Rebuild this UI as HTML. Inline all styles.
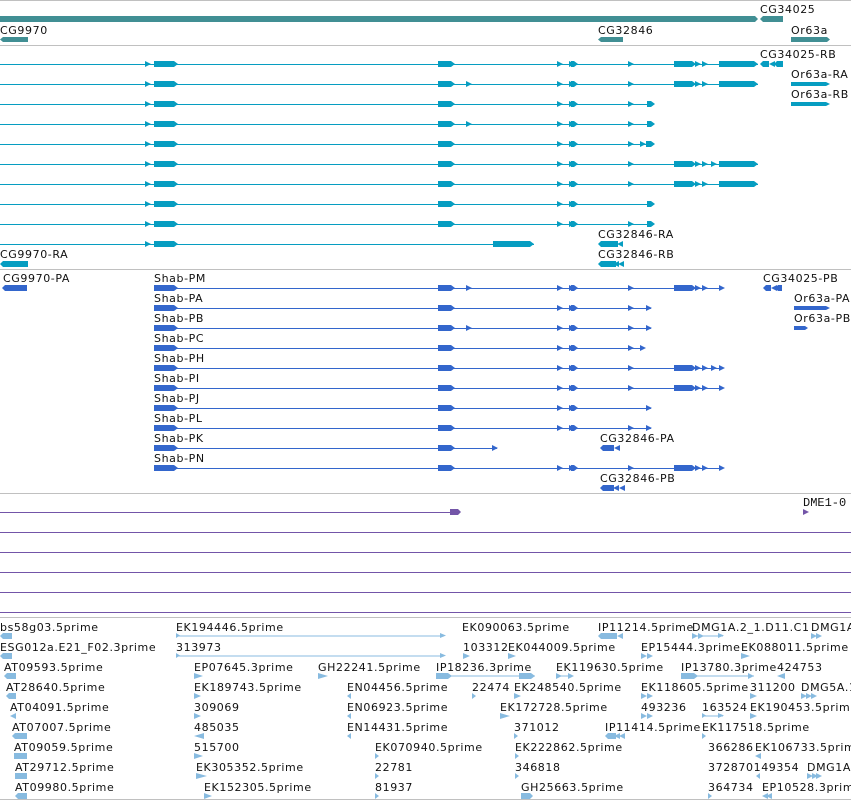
<!DOCTYPE html>
<html><head><meta charset="utf-8"><style>
html,body{margin:0;padding:0;background:#fff;width:851px;height:801px;overflow:hidden}
svg{display:block}
text{font-family:"DejaVu Sans","Liberation Sans",sans-serif;font-size:11px;fill:#111;letter-spacing:0.6px}
.g{fill:#418f94}.t{fill:#069dc1}.p{fill:#3366cc}.u{fill:#7355a8}.e{fill:#88bbe0}
</style></head><body>
<svg width="851" height="801" viewBox="0 0 851 801" xmlns="http://www.w3.org/2000/svg">
<defs>
<polygon id="ar" points="0,-3 6,0 0,3"/>
<polygon id="al" points="6,-3 0,0 6,3"/>
<g id="tA"><rect x="0" y="0" width="758" height="1"/><use href="#ar" x="145"/><polygon points="154,-3 174,-3 178,0 174,3 154,3"/><polygon points="438,-3 451,-3 455,0 451,3 438,3"/><use href="#ar" x="557"/><use href="#ar" x="569"/><polygon points="571,-3 574,-3 578,0 574,3 571,3"/><use href="#ar" x="628"/><polygon points="674,-3 692,-3 696,0 692,3 674,3"/><use href="#ar" x="695"/><use href="#ar" x="702"/><polygon points="719,-3 754,-3 758,0 754,3 719,3"/></g>
<g id="tB"><rect x="0" y="0" width="652" height="1"/><use href="#ar" x="145"/><polygon points="154,-3 174,-3 178,0 174,3 154,3"/><polygon points="438,-3 451,-3 455,0 451,3 438,3"/><use href="#ar" x="557"/><use href="#ar" x="569"/><polygon points="571,-3 574,-3 578,0 574,3 571,3"/><use href="#ar" x="628"/><polygon points="647,-3 651,-3 655,0 651,3 647,3"/></g>
<g id="pA"><rect x="154" y="0" width="568" height="1"/><polygon points="154,-3 174,-3 178,0 174,3 154,3"/><polygon points="438,-3 451,-3 455,0 451,3 438,3"/><use href="#ar" x="557"/><use href="#ar" x="569"/><polygon points="571,-3 574,-3 578,0 574,3 571,3"/><use href="#ar" x="628"/><polygon points="674,-3 692,-3 696,0 692,3 674,3"/><use href="#ar" x="695"/><use href="#ar" x="702"/><use href="#ar" x="719"/></g>
<g id="pB"><rect x="154" y="0" width="497" height="1"/><polygon points="154,-3 174,-3 178,0 174,3 154,3"/><polygon points="438,-3 451,-3 455,0 451,3 438,3"/><use href="#ar" x="557"/><use href="#ar" x="569"/><polygon points="571,-3 574,-3 578,0 574,3 571,3"/><use href="#ar" x="628"/><use href="#ar" x="646"/></g>
</defs>
<g fill="#c0c0c0"><rect x="0" y="0" width="851" height="1"/><rect x="0" y="45" width="851" height="1"/><rect x="0" y="269" width="851" height="1"/><rect x="0" y="493" width="851" height="1"/><rect x="0" y="617" width="851" height="1"/><rect x="0" y="799" width="851" height="1"/></g>

<g class="g"><polygon points="0,16 755,16 758,19 755,22 0,22"/><polygon points="763,16 783,16 783,22 763,22 760,19"/><polygon points="3,37 28,37 28,42 3,42 0,39.5"/><polygon points="601,37 623,37 623,42 601,42 598,39.5"/><polygon points="791,37 827,37 830,39.5 827,42 791,42"/></g>
<text x="760" y="13">CG34025</text><text x="0" y="34">CG9970</text><text x="598" y="34">CG32846</text><text x="791" y="34">Or63a</text>

<g class="t">
<use href="#tA" y="64"/>
<use href="#tA" y="84"/><use href="#ar" x="466" y="84"/>
<use href="#tB" y="104"/>
<use href="#tB" y="124"/><use href="#ar" x="466" y="124"/>
<g transform="translate(0,144)"><rect x="0" y="0" width="652" height="1"/><use href="#ar" x="145"/><polygon points="154,-3 174,-3 178,0 174,3 154,3"/><polygon points="438,-3 451,-3 455,0 451,3 438,3"/><use href="#ar" x="557"/><use href="#ar" x="569"/><polygon points="571,-3 574,-3 578,0 574,3 571,3"/><use href="#ar" x="628"/><use href="#ar" x="640"/><polygon points="646,-3 651,-3 655,0 651,3 646,3"/></g>
<use href="#tA" y="164"/><use href="#ar" x="711" y="164"/>
<use href="#tA" y="184"/>
<g transform="translate(0,204)"><rect x="0" y="0" width="652" height="1"/><use href="#ar" x="145"/><polygon points="154,-3 174,-3 178,0 174,3 154,3"/><polygon points="438,-3 451,-3 455,0 451,3 438,3"/><use href="#ar" x="557"/><use href="#ar" x="569"/><polygon points="571,-3 574,-3 578,0 574,3 571,3"/><polygon points="647,-3 651,-3 655,0 651,3 647,3"/></g>
<use href="#tB" y="224"/>
<g transform="translate(0,244)"><rect x="0" y="0" width="534" height="1"/><use href="#ar" x="145"/><polygon points="154,-3 174,-3 178,0 174,3 154,3"/><polygon points="493,-3 530,-3 534,0 530,3 493,3"/></g>
<polygon points="763,61 769,61 769,67 763,67 760,64"/><use href="#al" x="769" y="64"/><polygon points="777,61 783,61 783,67 777,67 774,64"/>
<polygon points="791,82 826,82 830,84 826,86 791,86"/><polygon points="791,102 826,102 830,104 826,106 791,106"/>
<polygon points="601,241 618,241 618,247 601,247 598,244"/><use href="#al" x="617" y="244"/>
<polygon points="601,261 616,261 616,267 601,267 598,264"/><use href="#al" x="613" y="264"/><use href="#al" x="618" y="264"/>
<polygon points="3,261 28,261 28,267 3,267 0,264"/>
</g>
<text x="760" y="58">CG34025-RB</text><text x="791" y="78">Or63a-RA</text><text x="791" y="98">Or63a-RB</text>
<text x="598" y="238">CG32846-RA</text><text x="598" y="258">CG32846-RB</text><text x="0" y="258">CG9970-RA</text>

<g class="p">
<use href="#pA" y="288"/><use href="#ar" x="466" y="288"/>
<use href="#pB" y="308"/>
<use href="#pB" y="328"/><use href="#ar" x="466" y="328"/>
<g transform="translate(0,348)"><rect x="154" y="0" width="490" height="1"/><polygon points="154,-3 174,-3 178,0 174,3 154,3"/><polygon points="438,-3 451,-3 455,0 451,3 438,3"/><use href="#ar" x="557"/><use href="#ar" x="569"/><polygon points="571,-3 574,-3 578,0 574,3 571,3"/><use href="#ar" x="628"/><use href="#ar" x="640"/></g>
<use href="#pA" y="368"/><use href="#ar" x="711" y="368"/>
<use href="#pA" y="388"/>
<g transform="translate(0,408)"><rect x="154" y="0" width="497" height="1"/><polygon points="154,-3 174,-3 178,0 174,3 154,3"/><polygon points="438,-3 451,-3 455,0 451,3 438,3"/><use href="#ar" x="557"/><use href="#ar" x="569"/><polygon points="571,-3 574,-3 578,0 574,3 571,3"/><use href="#ar" x="646"/></g>
<use href="#pB" y="428"/>
<g transform="translate(0,448)"><rect x="154" y="0" width="343" height="1"/><polygon points="154,-3 174,-3 178,0 174,3 154,3"/><polygon points="438,-3 451,-3 455,0 451,3 438,3"/><use href="#ar" x="492"/></g>
<use href="#pA" y="468"/>
<polygon points="766,285 771,285 771,291 766,291 763,288"/><use href="#al" x="771" y="288"/><polygon points="778,285 782,285 782,291 778,291 775,288"/>
<polygon points="794,306 826,306 830,308 826,310 794,310"/><polygon points="794,326 805,326 808,328 805,330 794,330"/>
<polygon points="603,445 614,445 614,451 603,451 600,448"/><use href="#al" x="614" y="448"/>
<polygon points="603,485 614,485 614,491 603,491 600,488"/><use href="#al" x="613" y="488"/><use href="#al" x="619" y="488"/>
<polygon points="5,285 27,285 27,291 5,291 2,288"/>
</g>
<g><text x="154" y="282">Shab-PM</text><text x="154" y="302">Shab-PA</text><text x="154" y="322">Shab-PB</text><text x="154" y="342">Shab-PC</text><text x="154" y="362">Shab-PH</text><text x="154" y="382">Shab-PI</text><text x="154" y="402">Shab-PJ</text><text x="154" y="422">Shab-PL</text><text x="154" y="442">Shab-PK</text><text x="154" y="462">Shab-PN</text></g>
<text x="763" y="282">CG34025-PB</text><text x="794" y="302">Or63a-PA</text><text x="794" y="322">Or63a-PB</text>
<text x="600" y="442">CG32846-PA</text><text x="600" y="482">CG32846-PB</text><text x="3" y="282">CG9970-PA</text>

<g class="u"><rect x="0" y="512" width="452" height="1"/><polygon points="450,509 458,509 461,512 458,515 450,515"/><polygon points="803,509 809,512 803,515"/>
<rect x="0" y="532" width="851" height="1"/><rect x="0" y="552" width="851" height="1"/><rect x="0" y="572" width="851" height="1"/><rect x="0" y="592" width="851" height="1"/><rect x="0" y="612" width="851" height="1"/></g>
<text x="803" y="506" style="font-family:'Liberation Mono',monospace;font-size:12px;letter-spacing:0">DME1-0</text>

<g class="e">
<polygon points="3,633 12,633 12,639 3,639 0,636"/><rect x="176" y="635.5" width="268" height="1"/><polygon points="176,633 180,635.5 176,638"/><polygon points="440,633 446,635.5 440,638"/>
<polygon points="601,633 617,633 617,639 601,639 598,636"/><use href="#al" x="617" y="636"/><rect x="692" y="635.5" width="31" height="1"/><use href="#ar" x="692" y="636"/><use href="#ar" x="698" y="636"/><polygon points="718,633 724,635.5 718,638"/><use href="#ar" x="811" y="636"/><use href="#ar" x="816" y="636"/>
<polygon points="3,653 12,653 12,659 3,659 0,656"/><rect x="176" y="655.5" width="268" height="1"/><polygon points="176,653 180,655.5 176,658"/><polygon points="440,653 446,655.5 440,658"/><polygon points="463,653 470,656 463,659"/><polygon points="508,653 516,656 508,659"/><use href="#ar" x="641" y="656"/><use href="#ar" x="647" y="656"/><polygon points="741,653 750,656 741,659"/>
<polygon points="7,673 16,673 16,679 7,679 4,676"/><polygon points="194,673 203,676 194,679"/><polygon points="318,673 328,676 318,679"/><rect x="436" y="675.5" width="99" height="1"/><polygon points="436,673 448,673 452,676 448,679 436,679"/><polygon points="519,673 531,673 535,676 531,679 519,679"/><rect x="556" y="675.5" width="17" height="1"/><use href="#ar" x="556" y="676"/><use href="#ar" x="568" y="676"/><rect x="681" y="675.5" width="73" height="1"/><polygon points="681,673 694,673 698,676 694,679 681,679"/><polygon points="748,673 754,676 748,679"/><polygon points="777,676 785,673 785,679"/>
<polygon points="9,693 16,693 16,699 9,699 6,696"/><polygon points="194,693 201,696 194,699"/><polygon points="347,696 351,693 351,699"/><polygon points="472,693 476,696 472,699"/><polygon points="514,693 521,696 514,699"/><use href="#ar" x="641" y="696"/><use href="#ar" x="647" y="696"/><polygon points="750,693 757,696 750,699"/><use href="#ar" x="801" y="696"/><use href="#ar" x="806" y="696"/><use href="#ar" x="811" y="696"/>
<polygon points="10,716 16,713 16,719"/><polygon points="194,713 201,716 194,719"/><polygon points="347,716 351,713 351,719"/><polygon points="500,713 510,716 500,719"/><use href="#ar" x="641" y="716"/><use href="#ar" x="647" y="716"/><rect x="702" y="715.5" width="21" height="1"/><polygon points="702,713 706,715.5 702,718"/><polygon points="718,713 724,715.5 718,718"/><polygon points="750,713 757,716 750,719"/>
<polygon points="15,733 27,733 27,739 15,739 12,736"/><polygon points="194,736 204,733 204,739"/><polygon points="347,736 351,733 351,739"/><polygon points="514,733 518,736 514,739"/><polygon points="608,733 616,733 616,739 608,739 605,736"/><use href="#al" x="614" y="736"/><use href="#al" x="619" y="736"/><polygon points="702,733 706,736 702,739"/>
<polygon points="14,753 27,753 27,759 14,759"/><polygon points="194,753 203,756 194,759"/><polygon points="375,753 379,756 375,759"/><polygon points="515,753 519,756 515,759"/><polygon points="755,756 761,753 761,759"/>
<polygon points="15,773 27,773 27,779 15,779"/><polygon points="196,773 207,776 196,779"/><polygon points="375,773 379,776 375,779"/><polygon points="515,773 519,776 515,779"/><polygon points="756,776 760,773 760,779"/><use href="#ar" x="807" y="776"/><use href="#ar" x="812" y="776"/><use href="#ar" x="816" y="776"/>
<polygon points="18,793 27,793 27,799 18,799 15,796"/><polygon points="204,793 212,796 204,799"/><polygon points="375,793 379,796 375,799"/><polygon points="521,793 530,793 533,796 530,799 521,799"/><polygon points="708,793 712,796 708,799"/><use href="#al" x="762" y="796"/><use href="#al" x="766" y="796"/>
</g>
<g>
<text x="0" y="631">bs58g03.5prime</text><text x="176" y="631">EK194446.5prime</text><text x="462" y="631">EK090063.5prime</text><text x="598" y="631">IP11214.5prime</text><text x="692" y="631">DMG1A.2_1.D11.C1</text><text x="811" y="631">DMG1A</text>
<text x="0" y="651">ESG012a.E21_F02.3prime</text><text x="176" y="651">313973</text><text x="463" y="651">103312</text><text x="508" y="651">EK044009.5prime</text><text x="641" y="651">EP15444.3prime</text><text x="741" y="651">EK088011.5prime</text>
<text x="4" y="671">AT09593.5prime</text><text x="194" y="671">EP07645.3prime</text><text x="318" y="671">GH22241.5prime</text><text x="436" y="671">IP18236.3prime</text><text x="556" y="671">EK119630.5prime</text><text x="681" y="671">IP13780.3prime</text><text x="777" y="671">424753</text>
<text x="6" y="691">AT28640.5prime</text><text x="194" y="691">EK189743.5prime</text><text x="347" y="691">EN04456.5prime</text><text x="472" y="691">22474</text><text x="514" y="691">EK248540.5prime</text><text x="641" y="691">EK118605.5prime</text><text x="750" y="691">311200</text><text x="801" y="691">DMG5A.1</text>
<text x="10" y="711">AT04091.5prime</text><text x="194" y="711">309069</text><text x="347" y="711">EN06923.5prime</text><text x="500" y="711">EK172728.5prime</text><text x="641" y="711">493236</text><text x="702" y="711">163524</text><text x="750" y="711">EK190453.5prime</text>
<text x="12" y="731">AT07007.5prime</text><text x="194" y="731">485035</text><text x="347" y="731">EN14431.5prime</text><text x="514" y="731">371012</text><text x="605" y="731">IP11414.5prime</text><text x="702" y="731">EK117518.5prime</text>
<text x="14" y="751">AT09059.5prime</text><text x="194" y="751">515700</text><text x="375" y="751">EK070940.5prime</text><text x="515" y="751">EK222862.5prime</text><text x="708" y="751">366286</text><text x="755" y="751">EK106733.5prime</text>
<text x="15" y="771">AT29712.5prime</text><text x="196" y="771">EK305352.5prime</text><text x="375" y="771">22781</text><text x="515" y="771">346818</text><text x="708" y="771">372870149354</text><text x="807" y="771">DMG1A</text>
<text x="15" y="791">AT09980.5prime</text><text x="204" y="791">EK152305.5prime</text><text x="375" y="791">81937</text><text x="521" y="791">GH25663.5prime</text><text x="708" y="791">364734</text><text x="762" y="791">EP10528.3prime</text>
</g>
</svg>
</body></html>
